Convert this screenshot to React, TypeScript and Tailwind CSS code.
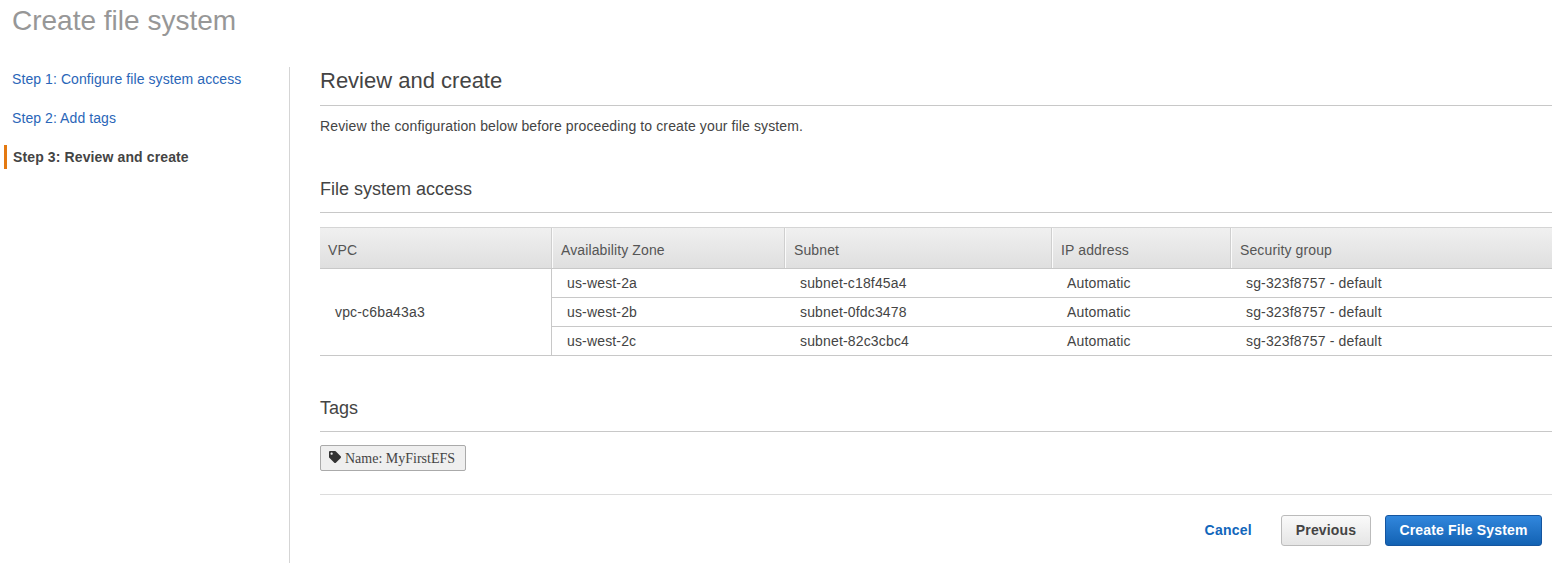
import { FaTag } from "react-icons/fa";

const rows = [
  { zone: "us-west-2a", subnet: "subnet-c18f45a4" },
  { zone: "us-west-2b", subnet: "subnet-0fdc3478" },
  { zone: "us-west-2c", subnet: "subnet-82c3cbc4" },
];

const headers = [
  { label: "VPC", width: "w-[232px]", edge: "pl-[8px] shadow-[inset_-1px_0_0_#cfcfcf]" },
  { label: "Availability Zone", width: "w-[233px]", edge: "pl-[9px] shadow-[inset_-1px_0_0_#cfcfcf,inset_1px_0_0_#fbfbfb]" },
  { label: "Subnet", width: "w-[267px]", edge: "pl-[9px] shadow-[inset_-1px_0_0_#cfcfcf,inset_1px_0_0_#fbfbfb]" },
  { label: "IP address", width: "w-[179px]", edge: "pl-[9px] shadow-[inset_-1px_0_0_#cfcfcf,inset_1px_0_0_#fbfbfb]" },
  { label: "Security group", width: "", edge: "pl-[9px] shadow-[inset_1px_0_0_#fbfbfb]" },
];

function Sidebar() {
  return (
    <nav className="w-[290px] shrink-0 border-r border-[#d5d5d5] pt-[3px]">
      <a className="block h-[39px] pl-[12px] text-[14px] leading-[18px] tracking-[0.08px] text-[#2a66b8]">Step 1: Configure file system access</a>
      <a className="block h-[36px] pl-[12px] text-[14px] leading-[18px] tracking-[0.08px] text-[#2a66b8]">Step 2: Add tags</a>
      <div className="ml-[4px] h-[24px] border-l-[3px] border-[#e47911] pl-[6px] text-[14px] leading-[24px] font-bold tracking-[0.12px] text-[#444]">
        Step 3: Review and create
      </div>
    </nav>
  );
}

function SpecTable() {
  return (
    <table className="w-full table-fixed border-collapse border-t border-[#d5d5d5] text-[14px] tracking-[0.12px]">
      <thead>
        <tr className="h-[41px] border-b border-[#c8c8c8] bg-gradient-to-b from-[#f0f0f0] to-[#dfdfdf]">
          {headers.map((h) => (
            <th key={h.label} className={`${h.width} ${h.edge} pt-[4px] text-left font-normal text-[#555]`}>
              {h.label}
            </th>
          ))}
        </tr>
      </thead>
      <tbody className="tracking-[0.16px]">
        {rows.map((row, i) => (
          <tr key={row.zone} className="h-[29px] border-b border-[#c8c8c8] text-[#444]">
            {i === 0 ? (
              <td rowSpan={3} className="pl-[15px] shadow-[inset_-1px_0_0_#c8c8c8]">
                vpc-c6ba43a3
              </td>
            ) : null}
            <td className="pl-[15px]">{row.zone}</td>
            <td className="pl-[15px]">{row.subnet}</td>
            <td className="pl-[15px]">Automatic</td>
            <td className="pl-[15px]">sg-323f8757 - default</td>
          </tr>
        ))}
      </tbody>
    </table>
  );
}

export default function App() {
  return (
    <div className="h-[563px] w-[1567px] overflow-hidden bg-white font-['Liberation_Sans',Arial,sans-serif]">
      <h1 className="h-[67px] pl-[12px] pt-[4px] text-[28px] leading-[34px] font-normal text-[#979797]">Create file system</h1>
      <div className="flex h-[496px]">
        <Sidebar />
        <main className="ml-[30px] w-[1232px]">
          <h2 className="h-[39px] border-b border-[#c8c8c8] pt-[1px] text-[22px] leading-[26px] font-normal text-[#444]">Review and create</h2>
          <p className="mt-[11px] text-[14px] leading-[18px] tracking-[0.12px] text-[#444]">Review the configuration below before proceeding to create your file system.</p>
          <h3 className="mt-[43px] h-[35px] border-b border-[#c8c8c8] text-[18px] leading-[22px] font-normal text-[#444]">File system access</h3>
          <div className="mt-[14px]">
            <SpecTable />
          </div>
          <h3 className="mt-[41px] h-[35px] border-b border-[#c8c8c8] text-[18px] leading-[22px] font-normal text-[#444]">Tags</h3>
          <div className="mt-[13px] flex">
            <span className="flex h-[26px] items-center gap-[4px] rounded-[2px] border border-[#aaa] bg-[#efefef] pl-[8px] pr-[10px] font-['Liberation_Serif',serif] text-[14px] text-[#444]">
              <FaTag className="-mt-[3px] h-[12px] w-[12px] text-[#333]" />
              Name: MyFirstEFS
            </span>
          </div>
          <div className="mt-[23px] flex items-center justify-end gap-[29px] border-t border-[#dcdcdc] pr-[10px] pt-[20px]">
            <a className="text-[14px] font-bold tracking-[0.25px] text-[#1166bb]">Cancel</a>
            <div className="flex gap-[14px]">
              <button className="h-[31px] w-[90px] rounded-[3px] border border-[#bbb] bg-gradient-to-b from-[#fafafa] to-[#e5e5e5] text-[14px] font-bold tracking-[0.15px] text-[#444]">Previous</button>
              <button className="h-[31px] w-[157px] rounded-[3px] border border-[#15559f] bg-gradient-to-b from-[#3187dd] to-[#1262b3] text-[14px] font-bold tracking-[0.15px] text-white">Create File System</button>
            </div>
          </div>
        </main>
      </div>
    </div>
  );
}
